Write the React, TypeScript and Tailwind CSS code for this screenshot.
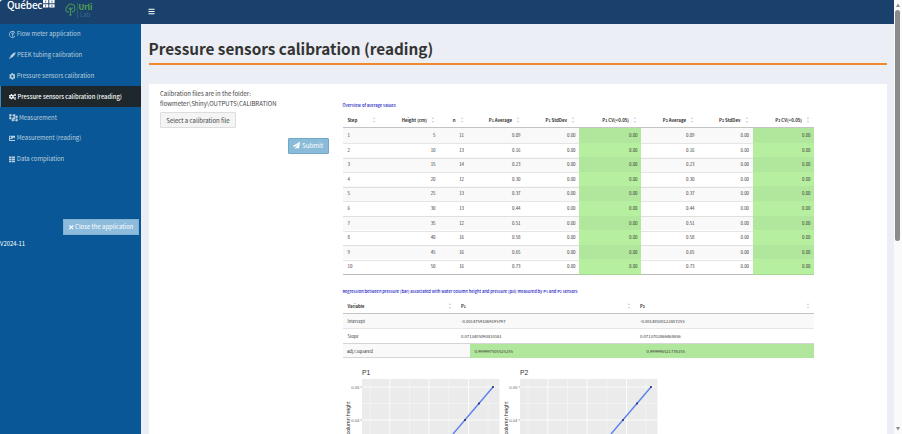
import type { ReactNode } from "react";
import clsx from "clsx";
import {
  FaBars,
  FaCog,
  FaCogs,
  FaImage,
  FaPaperPlane,
  FaRegQuestionCircle,
  FaThList,
  FaTimes,
} from "react-icons/fa";

const menuItems = [
  { label: "Flow meter application", icon: <FaRegQuestionCircle /> },
  { label: "PEEK tubing calibration", icon: <PenIcon /> },
  { label: "Pressure sensors calibration", icon: <FaCog /> },
  { label: "Pressure sensors calibration (reading)", icon: <FaCogs />, active: true },
  { label: "Measurement", icon: <UngroupIcon /> },
  { label: "Measurement (reading)", icon: <FaImage /> },
  { label: "Data compilation", icon: <FaThList /> },
];

const averages = [
  [5, 11, "0.09"],
  [10, 13, "0.16"],
  [15, 14, "0.23"],
  [20, 12, "0.30"],
  [25, 13, "0.37"],
  [30, 13, "0.44"],
  [35, 12, "0.51"],
  [40, 16, "0.58"],
  [45, 16, "0.65"],
  [50, 16, "0.73"],
];

const averageCols = "grid grid-cols-[37px_59.5px_28.5px_56.5px_55px_62px_57px_54.5px_61.5px]";

function PenIcon() {
  return (
    <svg viewBox="0 0 14 14" className="h-[7px] w-[7px]" fill="currentColor">
      <path d="M13.5 .5 12 5 7 10.500 4 11.500 1 14 0 13 2.500 10 3.500 7 9 2z" />
    </svg>
  );
}

function UngroupIcon() {
  return (
    <svg viewBox="0 0 18 15" className="h-[7.5px] w-[9px]" fill="none" stroke="currentColor" strokeWidth="1.4">
      <path d="M2.500 2.500H10.500V8.500H2.500zM10.500 5.500H15.500V12.500H7.500V8.500" />
      <path
        fill="currentColor"
        stroke="none"
        d="M.5 .5h4v4h-4zM8.500 .5h4v4h-4zM.5 6.500h4v4h-4zM8.500 6.500h4v4h-4zM13.500 3.500h4v4h-4zM13.500 10.500h4v4h-4zM5.500 10.500h4v4h-4z"
      />
    </svg>
  );
}

function Sensor({ n }: { n: number }) {
  return (
    <>
      P<span className="text-[3.6px]">{n}</span>
    </>
  );
}

function SortIcon() {
  return (
    <svg viewBox="0 0 4 8" className="h-[8px] w-[4px] shrink-0" fill="#d4d4d4">
      <path d="M2 1 3.2 3H.8zM2 7 .8 5h2.4z" />
    </svg>
  );
}

function HeadCell({ children, left }: { children: ReactNode; left?: boolean }) {
  return (
    <div className={clsx("flex items-center pt-[1.5px] pr-[4px] whitespace-nowrap", left ? "justify-between pl-[5px]" : "justify-end gap-[4px]")}>
      <span>{children}</span>
      <SortIcon />
    </div>
  );
}

function AveragesTable() {
  return (
    <div className="text-[4.4px] text-[#333]">
      <div className={clsx(averageCols, "h-[16.5px] border-b border-[#c4c4c4] font-bold")}>
        <HeadCell left>Step</HeadCell>
        <HeadCell>Height (cm)</HeadCell>
        <HeadCell>n</HeadCell>
        {[1, 2].map((n) => (
          <div key={n} className="contents">
            <HeadCell><Sensor n={n} /> Average</HeadCell>
            <HeadCell><Sensor n={n} /> StdDev</HeadCell>
            <HeadCell><Sensor n={n} /> CV(&lt;0.05)</HeadCell>
          </div>
        ))}
      </div>
      <div className="border-b border-[#d0d0d0]">
        {averages.map(([height, n, avg], i) => {
          const green = i % 2 === 0 ? "bg-[#b1e79c]" : "bg-[#b6ef9f]";
          const cell = "pr-[3.5px] text-right border-b border-black/10";
          return (
            <div key={i} className={clsx(averageCols, "h-[14.6px] leading-[15px]", i % 2 === 0 && "bg-[#f9f9f9]")}>
              <div className="border-b border-black/10 pl-[5px]">{i + 1}</div>
              <div className={cell}>{height}</div>
              <div className={cell}>{n}</div>
              <div className={cell}>{avg}</div>
              <div className={cell}>0.00</div>
              <div className={clsx(cell, green)}>0.00</div>
              <div className={cell}>{avg}</div>
              <div className={cell}>0.00</div>
              <div className={clsx(cell, green)}>0.00</div>
            </div>
          );
        })}
      </div>
    </div>
  );
}

function RegressionTable() {
  const cols = "grid grid-cols-[113.5px_179px_179px]";
  return (
    <div className="text-[4.2px] text-[#333]">
      <div className={clsx(cols, "h-[16px] border-b border-[#c4c4c4] font-bold")}>
        <HeadCell left>Variable</HeadCell>
        <HeadCell left><Sensor n={1} /></HeadCell>
        <HeadCell left><Sensor n={2} /></HeadCell>
      </div>
      <div className={clsx(cols, "h-[14.6px] border-b border-[#e6e6e6] bg-[#f9f9f9] leading-[15px] *:pl-[5px]")}>
        <div>Intercept</div>
        <div>-0.00147591069195797</div>
        <div>-0.00148500122407255</div>
      </div>
      <div className={clsx(cols, "h-[14.6px] leading-[15px] *:pl-[5px]")}>
        <div>Slope</div>
        <div>0.0713405090830161</div>
        <div>0.0713702866468656</div>
      </div>
      <div className="grid h-[15px] grid-cols-[127.5px_172px_172px] border-y border-[#d5d5d5] bg-[#f9f9f9] leading-[14px] *:pl-[4.5px]">
        <div>adj.r.squared</div>
        <div className="bg-[#b1e79c]">0.999997505525255</div>
        <div className="bg-[#b1e79c]">0.999996521776155</div>
      </div>
    </div>
  );
}

function Plot({ title }: { title: string }) {
  return (
    <svg viewBox="0 0 158 70" className="h-[70px] w-[158px]" fontFamily="Liberation Sans, sans-serif">
      <text x="19" y="11" fontSize="6.8" fill="#333">{title}</text>
      <rect x="19" y="15" width="137.5" height="55" fill="#ebebeb" />
      <g stroke="#fff" strokeWidth=".35">
        <path d="M27 15V70M66.5 15V70M105.7 15V70M145 15V70M19 39.5H156.5" />
      </g>
      <g stroke="#fff" strokeWidth=".8">
        <path d="M46.8 15V70M86 15V70M125.5 15V70M19 23H156.5M19 56H156.5" />
      </g>
      <path d="M17.5 23H19M17.5 56H19" stroke="#555" strokeWidth=".5" />
      <g fontSize="4.2" fill="#666" textAnchor="end">
        <text x="16.3" y="24.5">0.05</text>
        <text x="16.3" y="57.5">0.04</text>
      </g>
      <text x="7" y="37.5" transform="rotate(-90 7 37.5)" fontSize="5.3" fill="#222" textAnchor="end">column height</text>
      <path d="M150 23 110 70" stroke="#5b80ee" strokeWidth="1.4" />
      <g fill="#202a60">
        <circle cx="150" cy="23" r="1" />
        <circle cx="136" cy="39.4" r="1" />
        <circle cx="122" cy="55.9" r="1" />
      </g>
    </svg>
  );
}

function Logos() {
  return (
    <div className="flex h-full w-[141px] items-start pl-[7px] text-white">
      <span className="-mt-[2px] w-[35px] text-[10px] leading-[13px] font-medium tracking-[-0.2px]">Québec</span>
      <svg viewBox="0 0 12 8" className="ml-[1px] h-[8px] w-[12px]">
        <path fill="#fff" d="M0 0h5.3v3.3H0zM6.3 0h5.3v3.3H6.3zM0 4.3h5.3v3.3H0zM6.3 4.3h5.3v3.3H6.3z" />
        <path stroke="#1a406c" strokeWidth=".7" d="M2.65 .5v2.2M8.95 .5v2.2M2.65 4.8v2.2M8.95 4.8v2.2" />
      </svg>
      <svg viewBox="0 0 12 14" className="mt-[3px] ml-[10px] h-[13px] w-[11px]" fill="none" stroke="#479456" strokeWidth="1.1">
        <path d="M4.500 9.500C2 10 .5 8.500 1 6.500 1 4.500 2 4 3 3.500 3.500 1 6 .5 7.500 1.500 10 1.500 11 3.500 10.500 5.500 11.500 8 9.500 10 7.500 9.500M6 4.500V13M4 5.500 6 7.500l2.500-2.500M4.500 13h3" />
      </svg>
      <div className="mt-[2.500px] ml-[0.5px] border-l border-[#2d6268] pl-[1px] text-[7.7px]">
        <div className="leading-[8px] font-bold text-[#54a64f]">Urli</div>
        <div className="pl-[1.5px] text-[5.800px] leading-[7px] text-[#35708a]">Lab</div>
      </div>
    </div>
  );
}

function Sidebar() {
  return (
    <aside className="w-[141px] shrink-0 bg-[#095797] text-[5.95px] text-[#bed0de]">
      <nav className="pt-[0.5px]">
        {menuItems.map((item) => (
          <div
            key={item.label}
            className={clsx(
              "flex h-[20.8px] items-center border-l pt-[0.800px] pl-[7.5px]",
              item.active ? "gap-[1.500px] border-[#3c8dbc] bg-[#1e282c] text-[5.8px] font-medium text-white" : "gap-[1.5px] border-transparent",
            )}
          >
            <span className={clsx("shrink-0", item.active ? "text-[7.500px]" : "text-[6.800px]")}>{item.icon}</span>
            <span className="whitespace-nowrap">{item.label}</span>
          </div>
        ))}
      </nav>
      <div className="mt-[49.5px] flex justify-end pr-[2.5px]">
        <button className="flex h-[16px] w-[76px] items-center justify-center gap-[1px] border border-[#7fb2d2] bg-[#8dbbdb] text-[5.95px] text-white">
          <FaTimes className="text-[6.5px]" />
          Close the application
        </button>
      </div>
      <div className="mt-[4px] text-[5.9px] leading-[10px] text-white">V2024-11</div>
    </aside>
  );
}

function Scrollbar() {
  return (
    <div className="flex w-[8px] shrink-0 flex-col items-center bg-[#fafafa] pr-[1px]">
      <svg viewBox="0 0 6 10" className="h-[10px] w-[6px]" fill="#8b8b8b">
        <path d="M3 3.5 5 7H1z" />
      </svg>
      <div className="h-[231px] w-[4.5px] rounded-full bg-[#8b8b8b]" />
      <svg viewBox="0 0 6 10" className="mt-auto h-[10px] w-[6px]" fill="#8b8b8b">
        <path d="M3 6.5 5 3H1z" />
      </svg>
    </div>
  );
}

export default function App() {
  return (
    <div className="flex h-[434px] w-[902px] overflow-hidden bg-white font-['Noto_Sans_CJK_JP','Open_Sans',sans-serif]">
      <div className="flex min-w-0 flex-1 flex-col">
        <header className="flex h-[23.5px] shrink-0 items-center overflow-hidden rounded-tl-[3px] bg-[#1a406c]">
          <Logos />
          <FaBars className="ml-[7px] text-[7px] text-white" />
        </header>
        <div className="flex min-h-0 flex-1">
          <Sidebar />
          <main className="min-w-0 flex-1 overflow-hidden bg-[#ebeef4] pr-[7px] pl-[7.5px]">
            <h1 className="h-[41.5px] border-b-2 border-[#f0892c] pt-[13.500px] text-[15.3px] leading-[22px] font-bold whitespace-nowrap text-[#333]">
              Pressure sensors calibration (reading)
            </h1>
            <section className="mt-[18.5px] flex h-[400px] bg-white">
              <div className="w-[194px] shrink-0 pt-[5.5px] pl-[11.5px] text-[6px] text-[#444]">
                <p className="leading-[9.5px]">Calibration files are in the folder:</p>
                <p className="leading-[9.5px]">flowmeter\Shiny\OUTPUTS\CALIBRATION</p>
                <button className="mt-[4px] block h-[16px] w-[76px] rounded-[1px] border border-[#ddd] bg-[#f4f4f4] text-center leading-[15px]">
                  Select a calibration file
                </button>
                <div className="mt-[9.5px] flex justify-end pr-[13.500px]">
                  <button className="flex h-[16px] w-[41.5px] items-center justify-center gap-[1.5px] rounded-[1px] border border-[#71a8c8] bg-[#8abbd9] text-[6.2px] text-white">
                    <FaPaperPlane className="text-[7px]" />
                    Submit
                  </button>
                </div>
              </div>
              <div className="w-[471.5px] pt-[17px]">
                <h2 className="h-[11px] text-[4.1px] leading-[8px] font-medium text-[#2020c0]">Overview of average values</h2>
                <AveragesTable />
                <h2 className="mt-[12px] h-[11px] text-[4.06px] leading-[8px] font-medium whitespace-nowrap text-[#2020c0]">
                  Regression between pressure (bar) associated with water column height and pressure (psi) measured by <Sensor n={1} /> and <Sensor n={2} /> sensors
                </h2>
                <RegressionTable />
                <div className="mt-[5.5px] flex">
                  <Plot title="P1" />
                  <Plot title="P2" />
                </div>
              </div>
            </section>
          </main>
        </div>
      </div>
      <Scrollbar />
    </div>
  );
}
